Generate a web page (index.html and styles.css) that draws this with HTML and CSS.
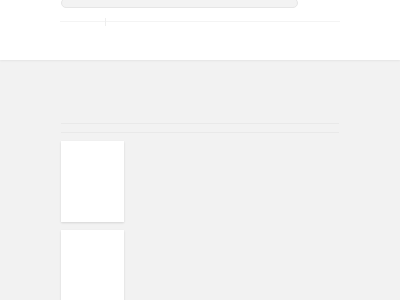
FILE: index.html
```html
<!DOCTYPE html>
<html lang="en">
  <head>
    <meta charset="UTF-8" />
    <title>Board</title>
    <link rel="stylesheet" href="styles.css">
  </head>
  <body>
    <header class="top">
      <div class="search-pill"></div>
      <div class="tab-line">
        <span class="caret"></span>
      </div>
    </header>

    <main class="content">
      <div class="rule"></div>
      <div class="rule second"></div>

      <div class="cards">
        <div class="card"></div>
        <div class="card"></div>
      </div>
    </main>
  </body>
</html>
```

FILE: styles.css
```css
* {
  box-sizing: border-box;
  font-family: "Liberation Sans", Arial, sans-serif;
}

body {
  margin: 0;
  padding: 0;
  background-color: #f2f2f2;
  overflow: hidden;
}

.top {
  display: flow-root;
  height: 60px;
  background: #fff;
  box-shadow: 0 1px 2px rgba(0, 0, 0, 0.06);
  padding: 0 60px;
  position: relative;
}

.search-pill {
  width: 237px;
  height: 10px;
  margin-top: -2px;
  margin-left: 1px;
  background: #f3f3f3;
  border: 1px solid #e6e6e6;
  border-radius: 6px;
}

.tab-line {
  margin-top: 13px;
  width: 280px;
  border-bottom: 1px solid #f4f4f4;
  height: 1px;
  position: relative;
}

.caret {
  position: absolute;
  left: 45px;
  top: -3px;
  width: 1px;
  height: 8px;
  background: #eeeeee;
}

.content {
  padding: 63px 61px 0;
}

.rule {
  height: 1px;
  width: 278px;
  background: #e9e9e9;
}

.rule.second {
  margin-top: 8px;
}

.cards {
  margin-top: 8px;
  display: flex;
  flex-direction: column;
  gap: 8px;
}

.card {
  width: 63px;
  height: 81px;
  background: #fff;
  box-shadow: 0 1px 2px rgba(0, 0, 0, 0.12);
}
```
